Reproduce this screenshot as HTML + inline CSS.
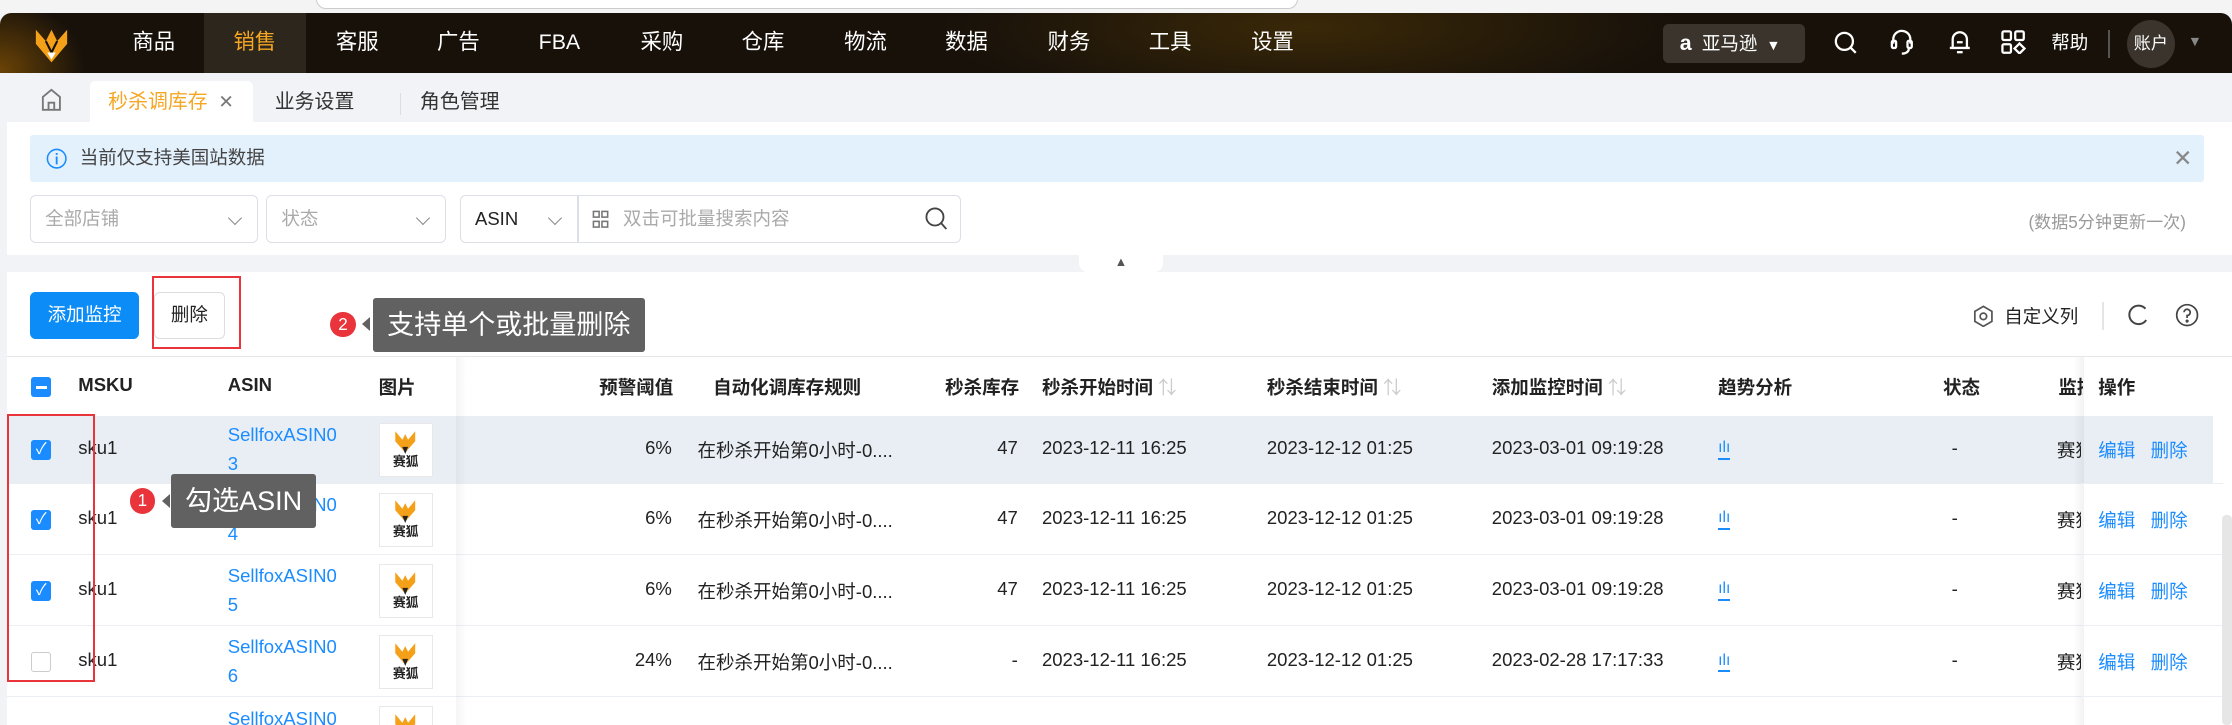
<!DOCTYPE html>
<html><head><meta charset="utf-8"><style>
*{box-sizing:border-box;margin:0;padding:0}
html,body{width:2232px;height:725px;overflow:hidden;background:#fff}
#w{zoom:1.42347;width:1568px;height:509px;position:relative;font-family:"Liberation Sans","Noto Sans CJK SC",sans-serif;font-size:13px;color:#222;background:#f2f3f7;overflow:hidden}
.a{position:absolute;white-space:nowrap}
.nav{left:0;top:9px;width:1568px;height:42px;background:radial-gradient(ellipse 260px 60px at 920px 10px,#3a2808,transparent),radial-gradient(ellipse 60px 50px at 0px 40px,#6a4306,transparent),#17110a;border-radius:8px 8px 0 0}
.ni{top:0;height:42px;line-height:42px;width:72px;text-align:center;color:#fff;font-size:15px}
.tabs{top:51px;left:0;width:1568px;height:36px;background:#f2f3f7}
.main{left:5px;top:86px;width:1563px;height:93px;background:#fff}
.sel{top:137px;height:34px;border:1px solid #dcdfe6;border-radius:4px;background:#fff;color:#aaa;font-size:13px;line-height:32px;padding-left:10px}
.chev{position:absolute;right:12px;top:12px;width:7px;height:7px;border-right:1.3px solid #888;border-bottom:1.3px solid #888;transform:rotate(45deg)}
.sec{left:5px;top:191px;width:1563px;height:318px;background:#fff}
.th{top:263px;font-weight:bold;font-size:13px;color:#222}
.cb{width:14px;height:14px;border-radius:2px;background:#1a8cff}
.row{left:5px;width:1557px;border-bottom:1px solid #ebeef2}
.td{font-size:13px}
.lk{color:#1a8cff}
.img{width:38px;height:38px;border:1px solid #e8e8e8;background:#fff;text-align:center;font-size:9px;font-weight:bold;line-height:10px}
.tip{background:#616161;color:#fff;font-size:19px;line-height:38px;padding:0 10px;border-radius:2px}
.dot{width:18px;height:18px;border-radius:50%;background:#e8343a;color:#fff;font-size:12px;text-align:center;line-height:18px}
</style></head><body><div id="w">
<div class="a" style="left:0;top:0;width:1568px;height:9px;background:#f4f4f4"></div>
<div class="a" style="left:222px;top:-8px;width:690px;height:14px;border:1px solid #ccc;border-radius:8px;background:#fff"></div>
<div class="a nav">
 <svg class="a" style="left:23px;top:8px" width="26" height="28" viewBox="0 0 26 28"><path d="M2 4 L9 12 L13 4 L17 12 L24 4 L24 14 L13 27 L2 14Z" fill="#f5a019"/><path d="M9 12 L13 20 L17 12" fill="none" stroke="#17110a" stroke-width="1.5"/><path d="M10 20 L13 25 L16 20Z" fill="#fff"/></svg>
 <div class="a" style="left:143px;top:0;width:72px;height:42px;background:#2d261d"></div>
 <div class="a ni" style="left:72px">商品</div><div class="a ni" style="left:143px;color:#f5a623">销售</div><div class="a ni" style="left:215px">客服</div><div class="a ni" style="left:286px">广告</div><div class="a ni" style="left:357px">FBA</div><div class="a ni" style="left:429px">采购</div><div class="a ni" style="left:500px">仓库</div><div class="a ni" style="left:572px">物流</div><div class="a ni" style="left:643px">数据</div><div class="a ni" style="left:715px">财务</div><div class="a ni" style="left:786px">工具</div><div class="a ni" style="left:858px">设置</div>
 <div class="a" style="left:1168px;top:8px;width:100px;height:27px;border-radius:4px;background:#3a342c;color:#fff;font-size:13px;line-height:27px;padding-left:12px"><b style="font-size:15px">a</b>&nbsp; 亚马逊 <span style="font-size:10px">&nbsp;▼</span></div>
 <svg class="a" style="left:1288px;top:12px" width="18" height="18" viewBox="0 0 18 18" fill="none" stroke="#fff" stroke-width="1.6"><circle cx="8" cy="8" r="6"/><path d="M12.5 12.5 L16 16"/></svg>
 <svg class="a" style="left:1327px;top:11px" width="18" height="20" viewBox="0 0 18 20" fill="none" stroke="#fff" stroke-width="1.6"><path d="M3 11 V8 a6 6 0 0 1 12 0 V11"/><rect x="2" y="9" width="3" height="5" rx="1"/><rect x="13" y="9" width="3" height="5" rx="1"/><path d="M14 14 q0 4 -5 4"/></svg>
 <svg class="a" style="left:1368px;top:11px" width="18" height="20" viewBox="0 0 18 20" fill="none" stroke="#fff" stroke-width="1.6"><path d="M4 14 V8 a5 5 0 0 1 10 0 V14 H2 H16"/><path d="M7 17 h4"/><path d="M7 10h4"/></svg>
 <svg class="a" style="left:1406px;top:12px" width="17" height="17" viewBox="0 0 17 17" fill="none" stroke="#fff" stroke-width="1.6"><rect x="1" y="1" width="6" height="6" rx="1"/><rect x="10" y="1" width="6" height="6" rx="1"/><rect x="1" y="10" width="6" height="6" rx="1"/><path d="M13 9.5 L16.5 13 L13 16.5 L9.5 13Z"/></svg>
 <div class="a" style="left:1441px;top:0;line-height:42px;color:#fff;font-size:13px">帮助</div>
 <div class="a" style="left:1481px;top:12px;width:1px;height:20px;background:#555"></div>
 <div class="a" style="left:1494px;top:5px;width:34px;height:34px;border-radius:50%;background:#3a342c;color:#fff;font-size:12px;line-height:34px;text-align:center">账户</div>
 <div class="a" style="left:1537px;top:0;line-height:42px;color:#888;font-size:10px">▼</div>
</div>
<div class="a tabs">
 <svg class="a" style="left:28px;top:10px" width="16" height="18" viewBox="0 0 16 18" fill="none" stroke="#777" stroke-width="1.3"><path d="M2 7 L8 2 L14 7 V16 H2Z"/><path d="M6 16 V11 H10 V16"/></svg>
 <div class="a" style="left:63px;top:6px;width:115px;height:31px;background:#fff;border-radius:4px 4px 0 0;color:#f5a623;font-size:14px;line-height:30px;padding-left:13px">秒杀调库存 <span style="color:#777;font-size:13px">&nbsp;✕</span></div>
 <div class="a" style="left:193px;top:6px;line-height:30px;font-size:14px;color:#333">业务设置</div>
 <div class="a" style="left:281px;top:14px;width:1px;height:16px;background:#ddd"></div>
 <div class="a" style="left:295px;top:6px;line-height:30px;font-size:14px;color:#333">角色管理</div>
</div>
<div class="a main"></div>
<div class="a" style="left:21px;top:95px;width:1527px;height:33px;background:#e3f1fd;border-radius:2px;font-size:13px;line-height:33px;padding-left:35px;color:#444">当前仅支持美国站数据
 <svg class="a" style="left:11px;top:9px" width="15" height="15" viewBox="0 0 15 15"><circle cx="7.5" cy="7.5" r="6.5" fill="none" stroke="#1a8cff" stroke-width="1.1"/><path d="M7.5 6 V11.5 M7.5 3.5 V4.8" stroke="#1a8cff" stroke-width="1.3"/></svg>
 <span class="a" style="right:8px;top:0;color:#888;font-size:16px">✕</span></div>
<div class="a sel" style="left:21px;width:160px">全部店铺<i class="chev"></i></div>
<div class="a sel" style="left:187px;width:126px">状态<i class="chev"></i></div>
<div class="a sel" style="left:323px;width:352px;color:#222">ASIN<i class="chev" style="right:auto;left:63px"></i>
 <div class="a" style="left:82px;top:0;width:1px;height:32px;background:#dcdfe6"></div>
 <svg class="a" style="left:92px;top:10px" width="12" height="13" viewBox="0 0 12 13" fill="none" stroke="#777" stroke-width="1.1"><rect x="1" y="1" width="4" height="4"/><rect x="7" y="1" width="4" height="4"/><rect x="1" y="8" width="4" height="4"/><rect x="7" y="8" width="4" height="4"/></svg>
 <span class="a" style="left:114px;top:0;color:#aaa">双击可批量搜索内容</span>
 <svg class="a" style="left:326px;top:8px" width="16" height="17" viewBox="0 0 16 17" fill="none" stroke="#444" stroke-width="1.3"><circle cx="7" cy="7" r="6"/><path d="M11.5 11.5 L15 15.5"/></svg>
</div>
<div class="a" style="left:1425px;top:146px;color:#999;font-size:12px">(数据5分钟更新一次)</div>
<div class="a" style="left:758px;top:178px;width:59px;height:13px;background:#fff;border-radius:0 0 6px 6px;text-align:center;font-size:9px;color:#555;line-height:13px">▲</div>
<div class="a sec"></div>
<div class="a" style="left:21px;top:205px;width:77px;height:33px;background:#0c8cf7;border-radius:4px;color:#fff;font-size:13px;line-height:33px;text-align:center">添加监控</div>
<div class="a" style="left:108px;top:205px;width:50px;height:33px;border:1px solid #ddd;border-radius:4px;font-size:13px;line-height:31px;text-align:center">删除</div>
<div class="a" style="left:107px;top:194px;width:62px;height:51px;border:2px solid #e8343a"></div>
<div class="a dot" style="left:232px;top:219px">2</div>
<div class="a tip" style="left:262px;top:209px">支持单个或批量删除</div>
<div class="a" style="left:254px;top:223px;border:5px solid transparent;border-right:6px solid #616161;border-left:0"></div>
<svg class="a" style="left:1385px;top:214px" width="16" height="16" viewBox="0 0 16 16" fill="none" stroke="#555" stroke-width="1.2"><path d="M8 1 L14 4.5 V11.5 L8 15 L2 11.5 V4.5Z"/><circle cx="8" cy="8" r="2.3"/></svg>
<div class="a" style="left:1408px;top:213px;font-size:13px">自定义列</div>
<div class="a" style="left:1477px;top:212px;width:1px;height:20px;background:#e5e5e5"></div>
<svg class="a" style="left:1494px;top:213px" width="16" height="17" viewBox="0 0 16 17" fill="none" stroke="#444" stroke-width="1.4"><path d="M13 4 A6.5 6.5 0 1 0 13.5 12"/></svg>
<svg class="a" style="left:1528px;top:213px" width="17" height="17" viewBox="0 0 17 17" fill="none" stroke="#444" stroke-width="1.2"><circle cx="8.5" cy="8.5" r="7.3"/><path d="M6.3 6.5 a2.2 2.2 0 1 1 2.2 2.3 V10.5"/><circle cx="8.5" cy="12.7" r=".5" fill="#444"/></svg>
<div class="a" style="left:5px;top:250px;width:1563px;height:1px;background:#e5e7eb"></div>
<div class="a" style="left:5px;top:292px;width:1557px;height:48px;background:#e9eef5"></div>
<div class="a row" style="top:339px"></div><div class="a row" style="top:389px"></div><div class="a row" style="top:439px"></div><div class="a row" style="top:489px"></div>
<div class="a" style="left:320px;top:251px;width:8px;height:258px;background:linear-gradient(90deg,rgba(0,0,0,.04),transparent)"></div>
<div class="a th" style="left:1446px;width:17px;overflow:hidden">监控</div>
<div class="a" style="left:1456px;top:251px;width:8px;height:258px;background:linear-gradient(270deg,rgba(0,0,0,.05),transparent)"></div>
<div class="a" style="left:1464px;top:251px;width:98px;height:258px;background:#fff"></div>
<div class="a" style="left:1464px;top:292px;width:91px;height:48px;background:#e9eef5"></div>
<div class="a" style="left:1462px;top:339px;width:100px;height:1px;background:#ebeef2"></div><div class="a" style="left:1462px;top:389px;width:100px;height:1px;background:#ebeef2"></div><div class="a" style="left:1462px;top:439px;width:100px;height:1px;background:#ebeef2"></div><div class="a" style="left:1462px;top:489px;width:100px;height:1px;background:#ebeef2"></div>
<div class="a" style="left:1561px;top:362px;width:7px;height:147px;background:#e6e6e6;border-radius:3px"></div>
<div class="a cb" style="left:22px;top:265px"><div style="margin:6px 3px;width:8px;height:2px;background:#fff"></div></div>
<div class="a th" style="left:55px">MSKU</div><div class="a th" style="left:160px">ASIN</div><div class="a th" style="left:266px">图片</div>
<div class="a th" style="left:421px">预警阈值</div><div class="a th" style="left:501px">自动化调库存规则</div><div class="a th" style="left:664px">秒杀库存</div>
<div class="a th" style="left:732px">秒杀开始时间 <span style="color:#ccc;font-weight:normal">⇅</span></div><div class="a th" style="left:890px">秒杀结束时间 <span style="color:#ccc;font-weight:normal">⇅</span></div><div class="a th" style="left:1048px">添加监控时间 <span style="color:#ccc;font-weight:normal">⇅</span></div>
<div class="a th" style="left:1207px">趋势分析</div><div class="a th" style="left:1365px">状态</div><div class="a th" style="left:1474px">操作</div>
<div id="rows"></div>
<script>
var r=[[316,'3','6%','47','2023-03-01 09:19:28',1],[365,'4','6%','47','2023-03-01 09:19:28',1],[415,'5','6%','47','2023-03-01 09:19:28',1],[465,'6','24%','-','2023-02-28 17:17:33',0],[515,'7','','','',2]];
var h='';r.forEach(function(x){var y=x[0];
if(x[5]==1)h+='<div class="a cb" style="left:22px;top:'+(y-7)+'px;color:#fff;font-size:11px;line-height:14px;text-align:center">✓</div>';
else if(x[5]==0)h+='<div class="a" style="left:22px;top:'+(y-7)+'px;width:14px;height:14px;border:1px solid #ccc;border-radius:2px;background:#fff"></div>';
if(y<500)h+='<div class="a td" style="left:55px;top:'+(y-9)+'px">sku1</div>';
h+='<div class="a td lk" style="left:160px;top:'+(y-20)+'px;line-height:20px">SellfoxASIN0<br>'+x[1]+'</div>';
h+='<div class="a img" style="left:266px;top:'+(y-19)+'px"><svg width="20" height="20" viewBox="0 0 20 20" style="display:block;margin:2px auto 0"><path d="M3 3 L8 9 L10 5 L12 9 L17 3 L17 10 L10 18 L3 10Z" fill="#f5a019"/><path d="M8 14 L10 19 L12 14Z" fill="#222"/></svg>赛狐</div>';
if(y<500){h+='<div class="a td" style="left:420px;width:52px;text-align:right;top:'+(y-9)+'px">'+x[2]+'</div>';
h+='<div class="a td" style="left:490px;top:'+(y-9)+'px">在秒杀开始第0小时-0....</div>';
h+='<div class="a td" style="left:680px;width:35px;text-align:right;top:'+(y-9)+'px">'+x[3]+'</div>';
h+='<div class="a td" style="left:732px;top:'+(y-9)+'px">2023-12-11 16:25</div><div class="a td" style="left:890px;top:'+(y-9)+'px">2023-12-12 01:25</div><div class="a td" style="left:1048px;top:'+(y-9)+'px">'+x[4]+'</div>';
h+='<div class="a lk" style="left:1207px;top:'+(y-8)+'px;font-size:11px;line-height:14px;border-bottom:1.5px solid #1a8cff">ılı</div>';
h+='<div class="a td" style="left:1371px;top:'+(y-9)+'px">-</div>';
h+='<div class="a td lk" style="left:1474px;top:'+(y-9)+'px;background:'+(y==316?'#e9eef5':'#fff')+'">编辑&nbsp;&nbsp; 删除</div>';}
});document.getElementById('rows').innerHTML=h;
</script>
<div class="a td" style="left:1445px;top:307px;width:17px;overflow:hidden">赛狐</div>
<div class="a td" style="left:1445px;top:356px;width:17px;overflow:hidden">赛狐</div>
<div class="a td" style="left:1445px;top:406px;width:17px;overflow:hidden">赛狐</div>
<div class="a td" style="left:1445px;top:456px;width:17px;overflow:hidden">赛狐</div>
<div class="a" style="left:5px;top:291px;width:62px;height:188px;border:2px solid #e8343a"></div>
<div class="a dot" style="left:91px;top:343px">1</div>
<div class="a tip" style="left:120px;top:333px">勾选ASIN</div>
<div class="a" style="left:114px;top:347px;border:5px solid transparent;border-right:6px solid #616161;border-left:0"></div>
</div></body></html>
